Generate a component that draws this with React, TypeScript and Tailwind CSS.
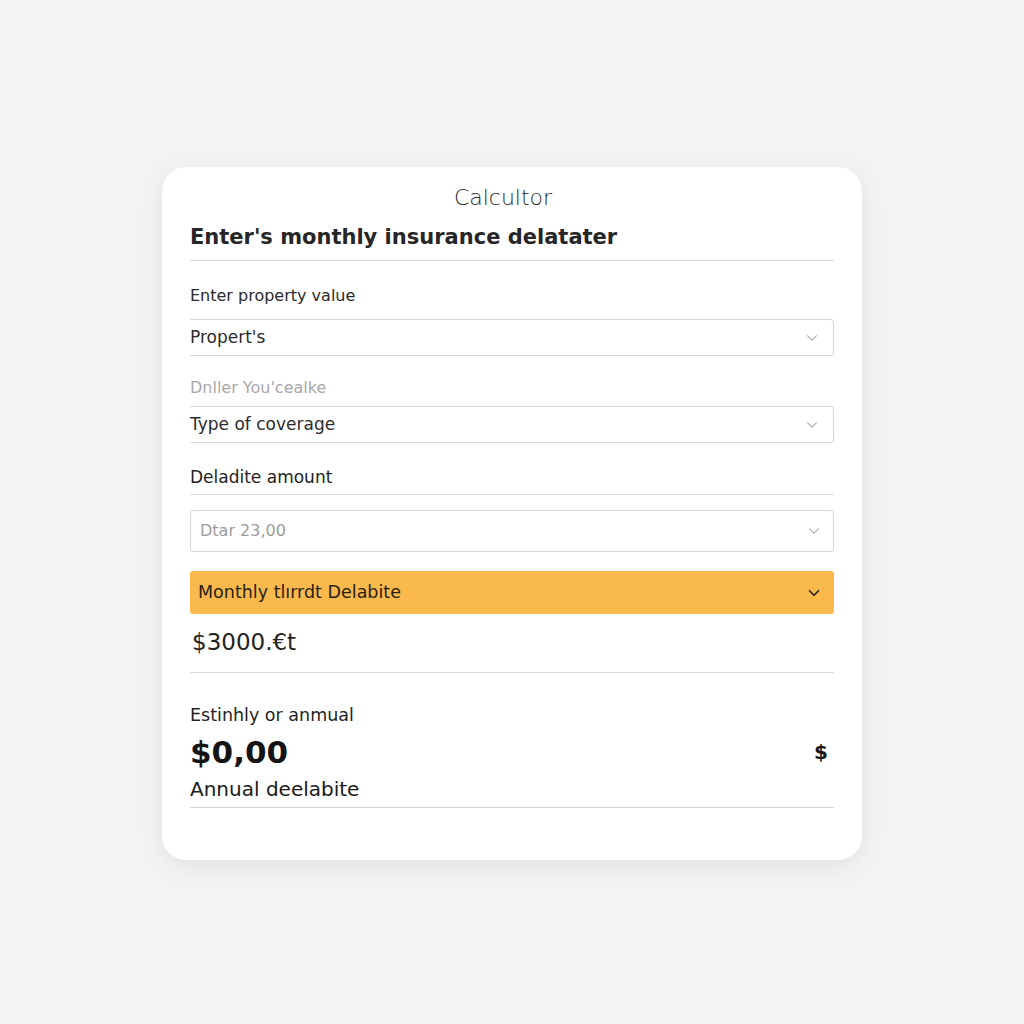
import { ChevronDown } from 'lucide-react';

function SelectRow({ text, muted, open }: { text: string; muted?: boolean; open?: boolean }) {
  return (
    <div
      className={`flex items-center justify-between bg-white ${
        open
          ? 'h-[37px] border-y border-r border-[#d6d6d6] rounded-r-[4px] pr-[12px]'
          : 'h-[42px] border border-[#d6d6d6] rounded-[4px] pl-[9px] pr-[10px]'
      }`}
    >
      <span className={`${open ? 'text-[17px]' : 'text-[16px]'} ${muted ? 'text-[#9d9d9d]' : 'text-[#2b2b2b]'}`}>{text}</span>
      <ChevronDown className="w-[18px] h-[18px] text-[#9a9a9a]" strokeWidth={1.4} />
    </div>
  );
}

export default function App() {
  return (
    <div
      className="min-h-screen bg-[#f2f3f3] flex items-start justify-center pt-[167px]"
      style={{ fontFamily: '"DejaVu Sans", "Open Sans", sans-serif' }}
    >
      <div className="w-[700px] bg-white rounded-[24px] shadow-[0_6px_24px_rgba(0,0,0,0.07)] px-[28px] pt-[17px] pb-[52px] text-[#1f1f1f]">
        <div className="pr-[18px] text-center text-[22px] leading-[28px] font-light text-[#2a2a2a]">Calcultor</div>
        <h1 className="mt-[10px] text-[21px] leading-[30px] font-semibold text-[#262626]">
          Enter's monthly insurance delatater
        </h1>
        <div className="mt-[8px] h-px bg-[#d9d9d9]" />

        <div className="mt-[23px] text-[16px] leading-[24px] text-[#2b2b2b]">Enter property value</div>
        <div className="mt-[11px]">
          <SelectRow text="Propert's" open />
        </div>

        <div className="mt-[20px] text-[16px] leading-[24px] text-[#a8a8a8]">Dnller You'cealke</div>
        <div className="mt-[6px]">
          <SelectRow text="Type of coverage" open />
        </div>

        <div className="mt-[22px] text-[17px] leading-[24px] text-[#232323]">Deladite amount</div>
        <div className="mt-[5px] h-px bg-[#dcdcdc]" />

        <div className="mt-[15px]">
          <SelectRow text="Dtar 23,00" muted />
        </div>

        <div className="mt-[19px] h-[43px] rounded-[3px] bg-[#f9b94d] flex items-center justify-between pl-[8px] pr-[11px]">
          <span className="text-[17.5px] font-medium text-[#2a2016]">Monthly tlırrdt Delabite</span>
          <ChevronDown className="w-[18px] h-[18px] text-[#2a2016]" strokeWidth={2.2} />
        </div>

        <div className="mt-[13px] pl-[2px] text-[23px] leading-[30px] text-[#222]">$3000.€t</div>
        <div className="mt-[15px] h-px bg-[#d9d9d9]" />

        <div className="mt-[30px] text-[17.5px] leading-[24px] text-[#1f1f1f]">Estinhly or anmual</div>
        <div className="mt-[7px] flex items-center justify-between">
          <span className="text-[31px] leading-[36px] font-bold text-[#141414]">$0,00</span>
          <span className="pr-[6px] text-[20px] font-semibold text-[#1a1a1a]">$</span>
        </div>
        <div className="mt-[6px] text-[20px] leading-[26px] text-[#1a1a1a]">Annual deelabite</div>
        <div className="mt-[5px] h-px bg-[#d4d4d4]" />
      </div>
    </div>
  );
}
